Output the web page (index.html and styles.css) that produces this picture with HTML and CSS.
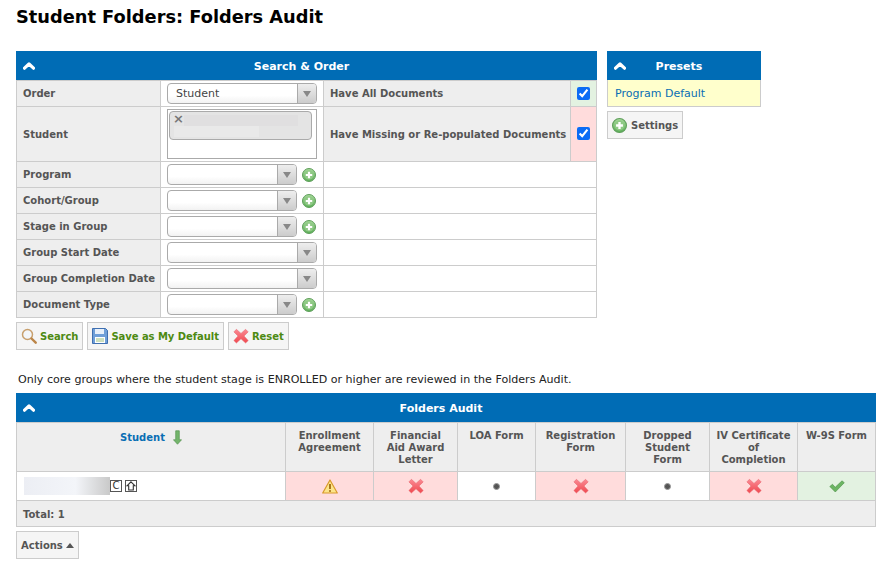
FILE: index.html
```html
<!DOCTYPE html>
<html lang="en">
<head>
<meta charset="utf-8">
<title>Student Folders: Folders Audit</title>
<link rel="stylesheet" href="styles.css">
</head>
<body>
<svg class="defs" width="0" height="0" aria-hidden="true">
  <defs>
    <linearGradient id="gPlus" x1="0" y1="0" x2="0" y2="1"><stop offset="0" stop-color="#a6d99a"/><stop offset="1" stop-color="#5cae58"/></linearGradient>
    <linearGradient id="gX" x1="0" y1="0" x2="0" y2="1"><stop offset="0" stop-color="#fb8a94"/><stop offset="1" stop-color="#f0484f"/></linearGradient>
    <symbol id="plus" viewBox="0 0 14 14"><circle cx="7" cy="7" r="6.5" fill="url(#gPlus)" stroke="#5f9e5b"/><circle cx="7" cy="7" r="4.6" fill="#8fc985"/><path d="M7 3.800v6.400M3.800 7h6.400" stroke="#fff" stroke-width="2.200"/></symbol>
    <symbol id="cross" viewBox="0 0 16 16"><path d="M3.400 1.300 8 5.400l4.600-4.100 2.600 2.600L11 8l4.200 4.600-2.600 2.400L8 10.800 3.400 15 .9 12.600 5 8 .9 3.900z" fill="url(#gX)" stroke="#e4626a" stroke-width=".5"/></symbol>
    <symbol id="chev" viewBox="0 0 12 8"><path d="M1.500 6.200 6 2l4.500 4.200" fill="none" stroke="#fff" stroke-width="3.200" stroke-linejoin="round" stroke-linecap="round"/></symbol>
  </defs>
</svg>

<h1 class="title">Student Folders: Folders Audit</h1>

<div class="top">
  <section class="panel search-panel">
    <header class="panel-head"><svg class="chev"><use href="#chev"/></svg><span>Search &amp; Order</span></header>
    <table class="form">
      <colgroup><col class="c-label"><col class="c-ctl"><col class="c-name"><col class="c-check"></colgroup>
      <tr class="r26">
        <th>Order</th>
        <td><div class="select wide"><span class="val">Student</span><i class="arrow"></i></div></td>
        <th>Have All Documents</th>
        <td class="check good"><input type="checkbox" checked></td>
      </tr>
      <tr class="r55">
        <th>Student</th>
        <td>
          <div class="multi"><div class="chip"><span class="chip-x">×</span><span class="blur b1"></span><span class="blur b2"></span></div></div>
        </td>
        <th>Have Missing or Re-populated Documents</th>
        <td class="check bad"><input type="checkbox" checked></td>
      </tr>
      <tr class="r26"><th>Program</th><td><div class="ctl"><div class="select"><i class="arrow"></i></div><svg class="plus"><use href="#plus"/></svg></div></td><td colspan="2" class="blank"></td></tr>
      <tr class="r26"><th>Cohort/Group</th><td><div class="ctl"><div class="select"><i class="arrow"></i></div><svg class="plus"><use href="#plus"/></svg></div></td><td colspan="2" class="blank"></td></tr>
      <tr class="r26"><th>Stage in Group</th><td><div class="ctl"><div class="select"><i class="arrow"></i></div><svg class="plus"><use href="#plus"/></svg></div></td><td colspan="2" class="blank"></td></tr>
      <tr class="r26"><th>Group Start Date</th><td><div class="select wide"><i class="arrow"></i></div></td><td colspan="2" class="blank"></td></tr>
      <tr class="r26"><th>Group Completion Date</th><td><div class="select wide"><i class="arrow"></i></div></td><td colspan="2" class="blank"></td></tr>
      <tr class="r26"><th>Document Type</th><td><div class="ctl"><div class="select"><i class="arrow"></i></div><svg class="plus"><use href="#plus"/></svg></div></td><td colspan="2" class="blank"></td></tr>
    </table>
    <div class="buttons">
      <button class="btn go" type="button">
        <svg class="ico" viewBox="0 0 16 16"><circle cx="6.500" cy="6.500" r="5" fill="#f3f6fa" stroke="#c8a06e" stroke-width="1.500"/><path d="m10.500 10.500 4.200 4.200" stroke="#bb8548" stroke-width="2.400" stroke-linecap="round"/></svg>Search</button>
      <button class="btn go" type="button">
        <svg class="ico" viewBox="0 0 16 16"><path d="M.5.500h13l2 2v13H.5z" fill="#6f9fd8" stroke="#3f6fb0"/><path d="M3 1h9v5H3z" fill="#e8f0fa"/><path d="M3 9h10v6H3z" fill="#fff"/><path d="M4 11h8M4 13h8" stroke="#9cc07c"/></svg>Save as My Default</button>
      <button class="btn go" type="button"><svg class="ico"><use href="#cross"/></svg>Reset</button>
    </div>
  </section>

  <aside class="presets">
    <section class="panel">
      <header class="panel-head"><svg class="chev"><use href="#chev"/></svg><span>Presets</span></header>
      <div class="preset-row"><a class="link">Program Default</a></div>
    </section>
    <button class="btn settings" type="button"><svg class="ico"><use href="#plus"/></svg>Settings</button>
  </aside>
</div>

<p class="note">Only core groups where the student stage is ENROLLED or higher are reviewed in the Folders Audit.</p>

<section class="panel audit">
  <header class="panel-head"><svg class="chev"><use href="#chev"/></svg><span>Folders Audit</span></header>
  <table class="grid">
    <colgroup><col class="a0"><col class="a1"><col class="a2"><col class="a3"><col class="a4"><col class="a5"><col class="a6"><col class="a7"></colgroup>
    <tr class="head-row">
      <th class="sort"><a class="link-b">Student</a><svg class="down" viewBox="0 0 10 16"><path d="M3 .5h4v10h2.500L5 15.500.5 10.500H3z" fill="#74b56c" stroke="#4f8f4a" stroke-width=".7"/></svg></th>
      <th>Enrollment Agreement</th>
      <th>Financial Aid Award Letter</th>
      <th>LOA Form</th>
      <th>Registration Form</th>
      <th>Dropped Student Form</th>
      <th>IV Certificate of Completion</th>
      <th>W-9S Form</th>
    </tr>
    <tr class="data-row">
      <td class="name"><div class="name-box"><span class="name-blur"></span><span class="tag">C</span><span class="tag"><svg viewBox="0 0 10 10" width="10" height="10"><path d="M5 .8 9 4.800H7.300V9H2.700V4.800H1z" fill="none" stroke="#333" stroke-width="1.100"/></svg></span></div></td>
      <td class="bad"><svg class="warn" viewBox="0 0 16 15"><path d="M8 1 15.300 14H.7z" fill="#fde58a" stroke="#d99a2b" stroke-width="1.200" stroke-linejoin="round"/><path d="M8 5v5" stroke="#a06a10" stroke-width="1.800"/><circle cx="8" cy="12" r="1" fill="#a06a10"/></svg></td>
      <td class="bad"><svg class="st"><use href="#cross"/></svg></td>
      <td><i class="dot"></i></td>
      <td class="bad"><svg class="st"><use href="#cross"/></svg></td>
      <td><i class="dot"></i></td>
      <td class="bad"><svg class="st"><use href="#cross"/></svg></td>
      <td class="good"><svg class="st" viewBox="0 0 16 16"><path d="M.8 8.500 3.500 6.300l2.700 3L13 2.800l2.300 1.900-9 9.300z" fill="#6cb563" stroke="#4f9149" stroke-width=".6"/></svg></td>
    </tr>
    <tr class="total-row"><th colspan="8">Total: 1</th></tr>
  </table>
</section>
<button class="btn actions" type="button">Actions<i class="up"></i></button>
</body>
</html>
```
FILE: styles.css
```css
* { box-sizing: border-box; }
html, body { margin: 0; padding: 0; }
body {
  padding: 0 7px 0 16px;
  background: #fff;
  color: #333;
  font: 11px "DejaVu Sans", Verdana, sans-serif;
  width: 883px;
  height: 567px;
  overflow: hidden;
}
.defs { position: absolute; }
.title {
  margin: 0;
  padding-top: 7px;
  height: 51px;
  font-size: 17.8px;
  line-height: 20px;
  font-weight: 700;
  color: #000;
}
.top { display: flex; gap: 10px; align-items: flex-start; }
.search-panel { width: 581px; }
.panel-head {
  position: relative;
  display: flex;
  justify-content: center;
  align-items: center;
  height: 29px;
  padding: 2px 10px 0 0;
  background: #006cb5;
  color: #fff;
  font-weight: 700;
  font-size: 11px;
}
.chev { position: absolute; left: 7px; top: 11px; width: 12px; height: 8px; }

table { border-collapse: collapse; table-layout: fixed; width: 100%; }
.form th, .form td, .grid th, .grid td { border: 1px solid #ccc; padding: 0; }
.c-label { width: 144px; }
.c-ctl { width: 163px; }
.c-check { width: 26px; }
.r26 { height: 26px; }
.r55 { height: 55px; }
.form th {
  background: #eee;
  color: #555;
  font-weight: 700;
  font-size: 10px;
  text-align: left;
  padding: 0 0 0 6px;
  white-space: nowrap;
}
.form td { padding-left: 6px; vertical-align: middle; }
.form td.blank { background: #fff; }
.check { text-align: center; padding: 0 0 1px !important; }
.check input { width: 13px; height: 13px; margin: 0; accent-color: #0b6cf5; vertical-align: middle; }
.good { background: #e3f2e1; }
.bad { background: #ffdcdc; }

.ctl { display: flex; align-items: center; gap: 5px; }
.select {
  position: relative;
  width: 130px;
  height: 21px;
  border: 1px solid #aaa;
  border-radius: 4px;
  background: linear-gradient(#fff 60%, #f2f2f2);
  font-size: 11px;
  line-height: 20px;
  color: #444;
  padding-left: 8px;
}
.select.wide { width: 150px; }
.arrow {
  position: absolute;
  top: 0; right: 0; bottom: 0;
  width: 19px;
  border-left: 1px solid #aaa;
  border-radius: 0 3px 3px 0;
  background: linear-gradient(#eee, #ccc);
}
.arrow::after {
  content: "";
  position: absolute;
  left: 5px; top: 7px;
  border: 4px solid transparent;
  border-top: 6px solid #888;
  border-bottom: 0;
}
.plus { width: 14px; height: 14px; }
.multi { position: relative; width: 150px; height: 50px; border: 1px solid #aaa; padding: 1px 1px 0 1px; background: #fff; }
.chip {
  position: relative;
  width: 143px;
  height: 29px;
  border: 1px solid #aaa;
  border-radius: 4px;
  background: #e4e4e4;
}
.chip-x { position: absolute; left: 3px; top: 0; font-size: 13px; line-height: 14px; font-weight: 700; color: #777; }
.blur { position: absolute; background: #ececec; height: 11px; }
.b1 { left: 14px; top: 3px; width: 114px; background: #e0dfe0; }
.b2 { left: 4px; top: 14px; width: 85px; background: #e9e9e9; }

.btn {
  display: inline-flex;
  align-items: center;
  gap: 3px;
  height: 28px;
  border: 1px solid #ccc;
  background: #f5f5f5;
  font: 700 10px "DejaVu Sans", Verdana, sans-serif;
  color: #555;
  padding: 0 4px;
  margin: 0;
}
.btn.go { color: #4d8a12; letter-spacing: -.05px; }
.ico { width: 16px; height: 16px; flex: none; }
.buttons { display: flex; gap: 4px; margin-top: 4px; }
.presets { width: 154px; }
.preset-row {
  height: 27px;
  background: #ffc;
  border: 1px solid #ccc;
  border-top: 0;
  display: flex;
  align-items: center;
  padding: 0 0 0 7px;
}
.link { color: #0a6eb4; font-size: 11px; }
.settings { margin-top: 4px; gap: 4px; }
.settings .ico { width: 15px; height: 15px; }

.note { margin: 22px 0 0 2px; height: 21px; font-size: 11.08px; line-height: 15px; color: #222; }
.audit { width: 860px; }
.a0 { width: 269px; }
.a1 { width: 88px; }
.a2 { width: 84px; }
.a3 { width: 78px; }
.a4 { width: 90px; }
.a5 { width: 84px; }
.a6 { width: 88px; }
.grid th {
  background: #eee;
  color: #555;
  font-weight: 700;
  font-size: 10px;
  line-height: 12px;
  vertical-align: top;
  padding: 7px 6px 0;
}
.head-row { height: 49px; }
.data-row { height: 29px; }
.total-row { height: 26px; }
.grid .total-row th { text-align: left; vertical-align: middle; padding: 2px 0 0 6px; }
.grid .sort { padding-top: 7px; }
.link-b { color: #0a6eb4; }
.down { width: 9px; height: 15px; margin-left: 8px; vertical-align: -4px; }
.grid td { text-align: center; vertical-align: middle; }
.grid td.name { text-align: left; padding-left: 7px; }
.name-box { display: flex; align-items: center; }
.name-blur { width: 86px; height: 18px; background: linear-gradient(90deg, #eceef4, #f3f5f9 60%, #c9c9c9); }
.tag {
  display: inline-flex;
  justify-content: center;
  align-items: center;
  width: 12px;
  height: 12px;
  border: 1px solid #555;
  margin-right: 3px;
  font-size: 10px;
  line-height: 10px;
  color: #333;
  background: #fff;
}
.st { width: 16px; height: 16px; vertical-align: middle; }
.warn { width: 16px; height: 15px; vertical-align: middle; }
.dot { display: inline-block; width: 7px; height: 7px; border-radius: 50%; background: #555; border: 1px solid #999; vertical-align: middle; }
.actions { margin-top: 4px; width: 63px; gap: 3px; }
.up { border: 4px solid transparent; border-bottom: 5px solid #555; border-top: 0; }
```
